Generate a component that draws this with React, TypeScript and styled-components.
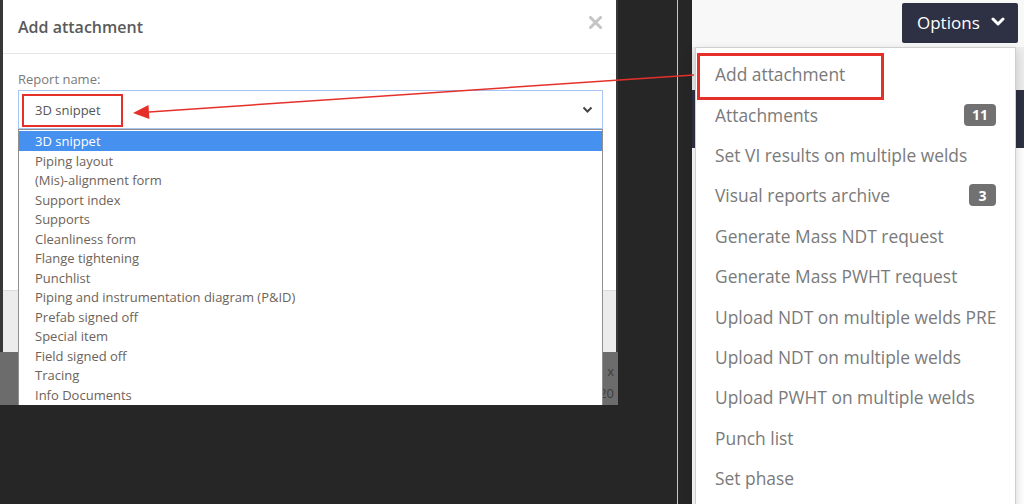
import styled, { createGlobalStyle, css } from "styled-components";

const GlobalStyle = createGlobalStyle`
	html, body {
		margin: 0;
		padding: 0;
		background: #262626;
		font-family: "Open Sans", "Liberation Sans", sans-serif;
	}
	* {
		box-sizing: border-box;
	}
`;

const reportNames = [
	"3D snippet",
	"Piping layout",
	"(Mis)-alignment form",
	"Support index",
	"Supports",
	"Cleanliness form",
	"Flange tightening",
	"Punchlist",
	"Piping and instrumentation diagram (P&ID)",
	"Prefab signed off",
	"Special item",
	"Field signed off",
	"Tracing",
	"Info Documents",
];

const menuItems: { label: string; badge?: string; marked?: boolean }[] = [
	{ label: "Add attachment", marked: true },
	{ label: "Attachments", badge: "11" },
	{ label: "Set VI results on multiple welds" },
	{ label: "Visual reports archive", badge: "3" },
	{ label: "Generate Mass NDT request" },
	{ label: "Generate Mass PWHT request" },
	{ label: "Upload NDT on multiple welds PRE" },
	{ label: "Upload NDT on multiple welds" },
	{ label: "Upload PWHT on multiple welds" },
	{ label: "Punch list" },
	{ label: "Set phase" },
];

export default function App() {
	return (
		<>
			<GlobalStyle />
			<Stage>
				<LeftShot>
					<Modal>
						<ModalHeader>
							<ModalTitle>Add attachment</ModalTitle>
							<CloseButton>
								<svg width="13" height="13" viewBox="0 0 13 13">
									<path d="M1.5 1.5 L11.5 11.5 M11.5 1.5 L1.5 11.5" stroke="#c4c4c4" strokeWidth="3" strokeLinecap="round" />
								</svg>
							</CloseButton>
						</ModalHeader>
						<ModalBody>
							<Label>Report name:</Label>
							<SelectWrap>
								<SelectBox>
									<Callout>3D snippet</Callout>
									<svg width="11" height="8" viewBox="0 0 11 8">
										<path d="M1.5 1.5 L5.5 5.5 L9.5 1.5" fill="none" stroke="#444" strokeWidth="2" />
									</svg>
								</SelectBox>
								<OptionList>
									{reportNames.map((name, i) => (
										<OptionItem key={name} $selected={i === 0}>
											{name}
										</OptionItem>
									))}
								</OptionList>
							</SelectWrap>
						</ModalBody>
						<ModalFooter />
					</Modal>
					<Backdrop>
						<BackdropText>x</BackdropText>
						<BackdropText>20</BackdropText>
					</Backdrop>
				</LeftShot>
				<Divider />
				<RightShot>
					<Page>
						<TopBar>
							<OptionsButton>
								Options
								<svg width="14" height="10" viewBox="0 0 14 10">
									<path d="M2 2 L7 7 L12 2" fill="none" stroke="#fff" strokeWidth="3" strokeLinecap="round" strokeLinejoin="round" />
								</svg>
							</OptionsButton>
						</TopBar>
						<SubBar />
						<Band />
						<PageBody />
					</Page>
					<Menu>
						{menuItems.map((item) => (
							<MenuItem key={item.label} $marked={item.marked}>
								{item.label}
								{item.badge && <Badge>{item.badge}</Badge>}
							</MenuItem>
						))}
					</Menu>
				</RightShot>
				<ArrowLayer width="1024" height="504" viewBox="0 0 1024 504">
					<line x1="694" y1="75" x2="149" y2="111.9" stroke="#e5302a" strokeWidth="1.5" />
					<polygon points="133,113 149.4,118.9 148.5,104.9" fill="#e5302a" />
				</ArrowLayer>
			</Stage>
		</>
	);
}

const Stage = styled.div`
	position: relative;
	display: flex;
	width: 1024px;
	height: 504px;
	overflow: hidden;
	background: #262626;
`;

const LeftShot = styled.div`
	display: flex;
	flex-direction: column;
	width: 618px;
	height: 405px;
	margin-right: 59px;
	overflow: hidden;
	background: #383838;
`;

const Modal = styled.div`
	display: flex;
	flex-direction: column;
	height: 352px;
	margin: 0 2px 0 3px;
	background: #fff;
`;

const ModalHeader = styled.div`
	display: flex;
	align-items: center;
	justify-content: space-between;
	height: 54px;
	padding: 0 14px 0 15px;
	border-bottom: 1px solid #e6e6e6;
`;

const ModalTitle = styled.h4`
	margin: 0;
	font-size: 16px;
	font-weight: 600;
	color: #5a5a5a;
`;

const CloseButton = styled.span`
	display: flex;
	margin-top: -8px;
`;

const ModalBody = styled.div`
	padding: 16px 13px 0 15px;
	background: #fff;
`;

const Label = styled.div`
	font-size: 13px;
	line-height: 18px;
	color: #7a7a7a;
	margin-bottom: 2px;
`;

const SelectWrap = styled.div`
	position: relative;
`;

const SelectBox = styled.div`
	display: flex;
	align-items: center;
	justify-content: space-between;
	height: 39px;
	padding: 0 9px 0 3px;
	border: 1px solid #a8c6f2;
	background: #fff;
`;

const Callout = styled.span`
	display: inline-flex;
	align-items: center;
	width: 101px;
	height: 33px;
	margin-top: 1px;
	padding-left: 11px;
	border: 2px solid #e5302a;
	font-size: 13px;
	color: #555;
`;

const OptionList = styled.ul`
	position: absolute;
	top: 100%;
	left: 0;
	right: 0;
	margin: 0;
	padding: 1px 0 0;
	list-style: none;
	background: #fff;
	border: 1px solid #8f8f8f;
	height: 280px;
`;

const OptionItem = styled.li<{ $selected?: boolean }>`
	height: 19.5px;
	line-height: 21px;
	padding-left: 16px;
	font-size: 13px;
	color: #6d6359;
	white-space: nowrap;
	${(p) =>
		p.$selected &&
		css`
			background: #4690f0;
			color: #fff;
		`}
`;

const ModalFooter = styled.div`
	margin-top: auto;
	height: 62px;
	border-top: 1px solid #dcdcdc;
	background: #ececec;
`;

const Backdrop = styled.div`
	flex: 1;
	display: flex;
	flex-direction: column;
	align-items: flex-end;
	justify-content: center;
	gap: 6px;
	padding: 6px 4px 0 0;
	background: #6c6c6c;
`;

const BackdropText = styled.span`
	font-size: 13px;
	line-height: 16px;
	color: #3e3e3e;
`;

const Divider = styled.div`
	width: 1px;
	height: 100%;
	background: #c8c8c8;
`;

const RightShot = styled.div`
	position: relative;
	flex: 1;
	padding-left: 14px;
	background: #262626;
`;

const Page = styled.div`
	display: flex;
	flex-direction: column;
	height: 100%;
	background: #fff;
`;

const TopBar = styled.div`
	display: flex;
	justify-content: flex-end;
	align-items: flex-start;
	height: 47px;
	padding: 3px 6px 0 0;
	background: #f8f8f8;
`;

const OptionsButton = styled.button`
	display: flex;
	align-items: center;
	gap: 11px;
	width: 116px;
	height: 40px;
	padding: 0 0 2px 15px;
	border: none;
	border-radius: 2px;
	background: #2e3143;
	color: #fff;
	font-family: "Open Sans", "Liberation Sans", sans-serif;
	font-size: 17px;
`;

const SubBar = styled.div`
	height: 43px;
	background: #ededed;
`;

const Band = styled.div`
	height: 58px;
	background: #2e3143;
`;

const PageBody = styled.div`
	flex: 1;
	background: #fff;
`;

const Menu = styled.ul`
	position: absolute;
	top: 47px;
	left: 17px;
	width: 321px;
	height: 470px;
	margin: 0;
	padding: 6px 0 0;
	list-style: none;
	background: #fff;
	border: 1px solid #cfcfcf;
	box-shadow: 0 4px 10px rgba(0, 0, 0, 0.18);
`;

const MenuItem = styled.li<{ $marked?: boolean }>`
	position: relative;
	display: flex;
	align-items: center;
	justify-content: space-between;
	height: 40.4px;
	padding: 0 19px 0 19px;
	font-size: 17.4px;
	color: #7a7a7a;
	white-space: nowrap;
	${(p) =>
		p.$marked &&
		css`
			&::after {
				content: "";
				position: absolute;
				left: 1px;
				top: -1px;
				width: 181px;
				height: 41px;
				border: 3px solid #e5302a;
			}
		`}
`;

const Badge = styled.span`
	display: inline-flex;
	align-items: center;
	justify-content: center;
	min-width: 27px;
	height: 22px;
	padding: 0 8px;
	border-radius: 4px;
	background: #717171;
	color: #fff;
	font-size: 14px;
	font-weight: 700;
`;

const ArrowLayer = styled.svg`
	position: absolute;
	top: 0;
	left: 0;
	pointer-events: none;
`;
